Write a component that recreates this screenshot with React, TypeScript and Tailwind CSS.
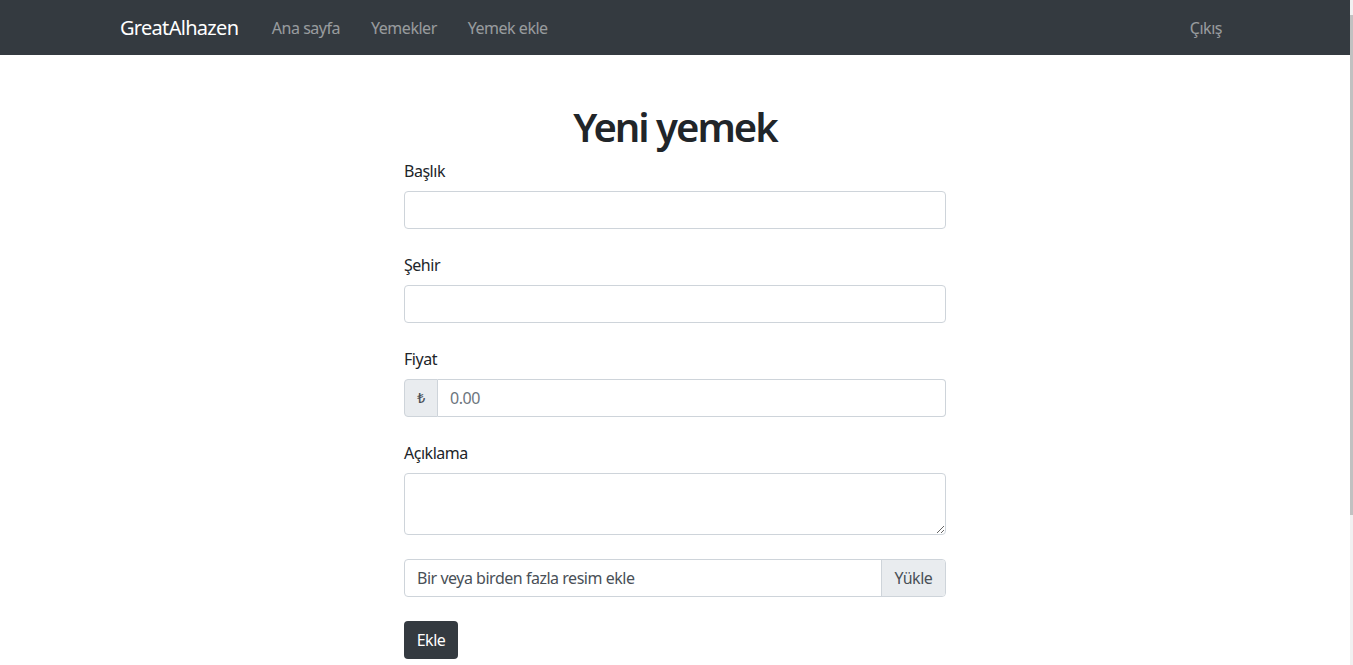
import React from "react";

const font = { fontFamily: '"Noto Sans", "Open Sans", "Liberation Sans", sans-serif' };

function Field({ label, children }: { label: string; children: React.ReactNode }) {
  return (
    <div className="mb-6">
      <label className="block mb-2 leading-6 text-base text-[#212529]">{label}</label>
      {children}
    </div>
  );
}

export default function App() {
  return (
    <div className="flex h-[665px] w-full overflow-hidden bg-white text-[#212529] tracking-[-0.03em]" style={font}>
      <div className="flex-1 flex flex-col">
        {/* Navbar */}
        <nav className="h-[55px] bg-[#343a40] flex items-center shrink-0">
          <div className="w-[1140px] mx-auto px-[15px] flex items-center">
            <a className="text-white text-[20px] leading-[30px] tracking-[-0.035em] mr-[18px]">GreatAlhazen</a>
            <a className="px-[15.5px] text-base text-white/50">Ana sayfa</a>
            <a className="px-[15.5px] text-base text-white/50">Yemekler</a>
            <a className="px-[15.5px] text-base text-white/50">Yemek ekle</a>
            <a className="ml-auto px-2 text-base text-white/50">Çıkış</a>
          </div>
        </nav>

        {/* Form */}
        <div className="w-[542px] mx-auto pt-12">
          <h1 className="text-center text-[40px] leading-[48px] font-semibold tracking-[-0.05em] mb-2 text-[#212529]">
            Yeni yemek
          </h1>

          <Field label="Başlık">
            <input className="block w-full h-[38px] px-3 border border-[#ced4da] rounded" />
          </Field>

          <Field label="Şehir">
            <input className="block w-full h-[38px] px-3 border border-[#ced4da] rounded" />
          </Field>

          <Field label="Fiyat">
            <div className="flex h-[38px]">
              <span className="w-[34px] flex items-center justify-center bg-[#e9ecef] border border-[#ced4da] rounded-l text-sm font-medium text-[#495057]">
                ₺
              </span>
              <input
                placeholder="0.00"
                className="flex-1 px-3 border border-l-0 border-[#ced4da] rounded-r text-base placeholder:text-[#6c757d]"
              />
            </div>
          </Field>

          <Field label="Açıklama">
            <textarea className="block w-full h-[62px] px-3 py-1.5 border border-[#ced4da] rounded" />
          </Field>

          <div className="flex h-[38px] mb-6 border border-[#ced4da] rounded overflow-hidden">
            <span className="flex-1 flex items-center px-3 text-base text-[#495057]">Bir veya birden fazla resim ekle</span>
            <span className="w-[64px] flex items-center justify-center bg-[#e9ecef] border-l border-[#ced4da] text-base text-[#495057]">
              Yükle
            </span>
          </div>

          <button className="h-[38px] w-[54px] bg-[#343a40] text-white text-base rounded">Ekle</button>
        </div>
      </div>

      {/* scrollbar */}
      <div className="w-[3px] bg-[#f1f1f1] flex flex-col pt-[15px]">
        <div className="h-[500px] bg-[#c1c1c1]" />
      </div>
    </div>
  );
}
